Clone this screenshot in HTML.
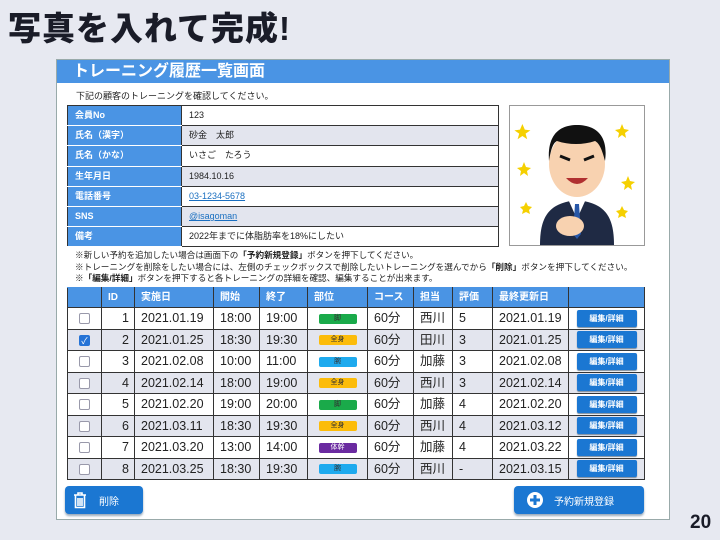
<!DOCTYPE html>
<html><head><meta charset="utf-8"><style>
*{margin:0;padding:0;box-sizing:border-box}
body{width:720px;height:540px;background:#e7e9f1;font-family:"Liberation Sans","Noto Sans CJK JP",sans-serif;position:relative;overflow:hidden;color:#222}
.h1{position:absolute;left:8px;top:2px;font-size:33px;font-weight:900;color:#1a1c28;letter-spacing:1px}
.panel{position:absolute;left:56px;top:59px;width:614px;height:461px;background:#fff;border:1px solid #9aa}
.bar{position:absolute;left:0;top:0;width:612px;height:23px;background:#4a94e4;color:#fff;font-weight:bold;font-size:16px;padding-left:16px;line-height:24px}
.sub{position:absolute;left:19px;top:29px;font-size:9px}
table{border-collapse:collapse;position:absolute}
.info{left:10px;top:45px;width:432px}
.info td{border:1px solid #333;height:20.2px;font-size:9px;padding-left:7px;line-height:1}
.info td.l{background:#4a94e4;color:#fff;font-weight:bold;width:114px;border-color:#333 #333 #fff #333}
.info tr:nth-child(even) td.v{background:#e3e5ee}
a{color:#1a6fc0;text-decoration:underline}
.photo{position:absolute;left:452px;top:45px;width:136px;height:141px;border:1px solid #999;background:#fff}
.notes{position:absolute;left:18px;top:190px;font-size:8.6px;line-height:11.6px}
.main{left:10px;top:227px;width:578px}
.main th{background:#4a94e4;color:#fff;font-size:10px;text-align:left;padding-left:6px;height:20px;border:1px solid #333;border-top-color:#4a94e4;line-height:1}
.main td{border:1px solid #333;height:21.5px;font-size:12.5px;padding-left:6px;color:#222;line-height:1;vertical-align:middle}
.main tr:nth-child(odd) td{background:#e3e5ee}
.main td.c{text-align:center;padding:0}
.cb{display:inline-block;width:11px;height:11px;border:1px solid #99a;background:#fff;border-radius:2px;vertical-align:middle}
.cb.on{background:#2573d6;border-color:#2573d6;color:#fff;font-size:9px;line-height:10px;text-align:center}
.tag{display:inline-block;width:38px;height:10px;border-radius:2px;font-size:7px;line-height:10px;text-align:center;color:#333;vertical-align:middle}
.g{background:#1aaa4a}.y{background:#fcbc0a}.b{background:#1eaaee}.p{background:#6a2aa0;color:#fff!important}
.eb{display:inline-block;width:60px;height:17px;background:#1b77d2;border-radius:2px;color:#fff;font-size:8px;font-weight:bold;line-height:17px;text-align:center;box-shadow:0 1px 1px #789;vertical-align:middle}
.btn{position:absolute;background:#1b77d2;border-radius:4px;color:#fff;font-size:10px;box-shadow:0 2px 2px #9ab}
.num{position:absolute;left:690px;top:512px;font-size:19px;font-weight:bold;color:#1a1c28}
</style></head><body>
<div class="h1">写真を入れて完成!</div>
<div class="panel">
<div class="bar">トレーニング履歴一覧画面</div>
<div class="sub">下記の顧客のトレーニングを確認してください。</div>
<table class="info">
<tr><td class="l">会員No</td><td class="v">123</td></tr>
<tr><td class="l">氏名（漢字）</td><td class="v">砂金　太郎</td></tr>
<tr><td class="l">氏名（かな）</td><td class="v">いさご　たろう</td></tr>
<tr><td class="l">生年月日</td><td class="v">1984.10.16</td></tr>
<tr><td class="l">電話番号</td><td class="v"><a>03-1234-5678</a></td></tr>
<tr><td class="l">SNS</td><td class="v"><a>@isagoman</a></td></tr>
<tr><td class="l">備考</td><td class="v">2022年までに体脂肪率を18%にしたい</td></tr>
</table>
<div class="photo"><svg width="134" height="139" viewBox="0 0 134 139">
<g fill="#f5d000"><path d="M18 25l3 7 7 1-6 4 2 7-6-4-6 4 2-7-6-4 7-1z" transform="translate(-2,-2) scale(.8)"/><path d="M112 18l2 5 5 1-4 3 1 5-4-3-4 3 1-5-4-3 5-1z"/><path d="M14 56l2 5 5 1-4 3 1 5-4-3-4 3 1-5-4-3 5-1z"/><path d="M118 70l2 5 5 1-4 3 1 5-4-3-4 3 1-5-4-3 5-1z"/><path d="M16 96l2 4 4 1-3 3 1 4-4-2-4 2 1-4-3-3 4-1z"/><path d="M112 100l2 4 4 1-3 3 1 4-4-2-4 2 1-4-3-3 4-1z"/></g>
<path d="M30 139c0-30 10-42 37-45 27 3 37 15 37 45z" fill="#1f2a44"/>
<path d="M58 93l9 20 9-20z" fill="#fff"/><path d="M65 98h4l2 30-4 5-4-5z" fill="#2757a8"/>
<ellipse cx="67" cy="58" rx="28" ry="33" fill="#f8d2b0"/>
<path d="M39 55c-2-28 12-36 28-36s32 8 28 36c-3-12-6-18-10-20-12 4-26 4-38 0-4 2-6 8-8 20z" fill="#111"/>
<path d="M50 50l10 4M84 50l-10 4" stroke="#111" stroke-width="3"/>
<path d="M56 72q11 12 22 0z" fill="#b03030"/>
<ellipse cx="60" cy="120" rx="14" ry="10" fill="#f8d2b0"/>
</svg></div>
<div class="notes">※新しい予約を追加したい場合は画面下の<b>「予約新規登録」</b>ボタンを押下してください。<br>※トレーニングを削除をしたい場合には、左側のチェックボックスで削除したいトレーニングを選んでから<b>「削除」</b>ボタンを押下してください。<br>※<b>「編集/詳細」</b>ボタンを押下すると各トレーニングの詳細を確認、編集することが出来ます。</div>
<table class="main">
<tr><th style="width:34px"></th><th style="width:33px">ID</th><th style="width:79px">実施日</th><th style="width:46px">開始</th><th style="width:48px">終了</th><th style="width:60px">部位</th><th style="width:46px">コース</th><th style="width:39px">担当</th><th style="width:40px">評価</th><th style="width:76px">最終更新日</th><th></th></tr>
<tr><td class="c"><span class="cb"></span></td><td style="text-align:right;padding-right:5px">1</td><td>2021.01.19</td><td>18:00</td><td>19:00</td><td class="c"><span class="tag g">脚</span></td><td>60分</td><td>西川</td><td>5</td><td>2021.01.19</td><td class="c"><span class="eb">編集/詳細</span></td></tr>
<tr><td class="c"><span class="cb on">✓</span></td><td style="text-align:right;padding-right:5px">2</td><td>2021.01.25</td><td>18:30</td><td>19:30</td><td class="c"><span class="tag y">全身</span></td><td>60分</td><td>田川</td><td>3</td><td>2021.01.25</td><td class="c"><span class="eb">編集/詳細</span></td></tr>
<tr><td class="c"><span class="cb"></span></td><td style="text-align:right;padding-right:5px">3</td><td>2021.02.08</td><td>10:00</td><td>11:00</td><td class="c"><span class="tag b">腕</span></td><td>60分</td><td>加藤</td><td>3</td><td>2021.02.08</td><td class="c"><span class="eb">編集/詳細</span></td></tr>
<tr><td class="c"><span class="cb"></span></td><td style="text-align:right;padding-right:5px">4</td><td>2021.02.14</td><td>18:00</td><td>19:00</td><td class="c"><span class="tag y">全身</span></td><td>60分</td><td>西川</td><td>3</td><td>2021.02.14</td><td class="c"><span class="eb">編集/詳細</span></td></tr>
<tr><td class="c"><span class="cb"></span></td><td style="text-align:right;padding-right:5px">5</td><td>2021.02.20</td><td>19:00</td><td>20:00</td><td class="c"><span class="tag g">脚</span></td><td>60分</td><td>加藤</td><td>4</td><td>2021.02.20</td><td class="c"><span class="eb">編集/詳細</span></td></tr>
<tr><td class="c"><span class="cb"></span></td><td style="text-align:right;padding-right:5px">6</td><td>2021.03.11</td><td>18:30</td><td>19:30</td><td class="c"><span class="tag y">全身</span></td><td>60分</td><td>西川</td><td>4</td><td>2021.03.12</td><td class="c"><span class="eb">編集/詳細</span></td></tr>
<tr><td class="c"><span class="cb"></span></td><td style="text-align:right;padding-right:5px">7</td><td>2021.03.20</td><td>13:00</td><td>14:00</td><td class="c"><span class="tag p">体幹</span></td><td>60分</td><td>加藤</td><td>4</td><td>2021.03.22</td><td class="c"><span class="eb">編集/詳細</span></td></tr>
<tr><td class="c"><span class="cb"></span></td><td style="text-align:right;padding-right:5px">8</td><td>2021.03.25</td><td>18:30</td><td>19:30</td><td class="c"><span class="tag b">腕</span></td><td>60分</td><td>西川</td><td>-</td><td>2021.03.15</td><td class="c"><span class="eb">編集/詳細</span></td></tr>
</table>
<div class="btn" style="left:8px;top:426px;width:78px;height:28px">
<svg style="position:absolute;left:8px;top:5px" width="14" height="18" viewBox="0 0 14 18" fill="none" stroke="#fff" stroke-width="1.6"><path d="M1 4h12M5 4V2h4v2M2.5 4.5v12h9v-12M5 7v8M7 7v8M9 7v8"/></svg>
<span style="position:absolute;left:34px;top:7px">削除</span></div>
<div class="btn" style="left:457px;top:426px;width:130px;height:28px">
<svg style="position:absolute;left:12px;top:5px" width="18" height="18" viewBox="0 0 18 18"><circle cx="9" cy="9" r="8" fill="#fff"/><path d="M9 4v10M4 9h10" stroke="#1b77d2" stroke-width="3"/></svg>
<span style="position:absolute;left:40px;top:7px">予約新規登録</span></div>
</div>
<div class="num">20</div>
</body></html>
